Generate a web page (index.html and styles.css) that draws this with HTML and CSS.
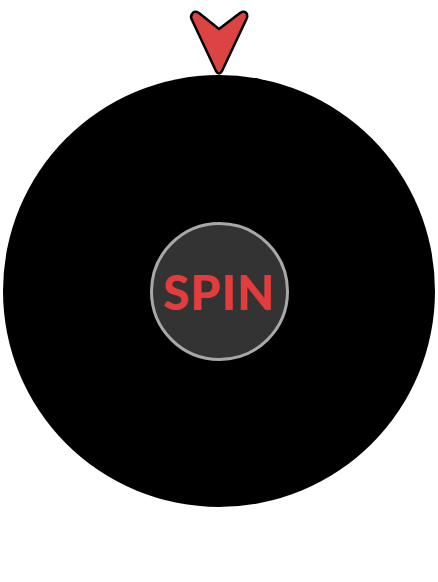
FILE: index.html
```html
<!DOCTYPE html>
<html>
<head>
<meta charset="utf-8">
<link rel="stylesheet" href="styles.css">
</head>
<body>
<div class="stage">
  <svg class="pointer" width="64" height="70" viewBox="0 0 64 70">
    <path d="M 11 5 L 31 21 L 52 5 Q 57 2 59 6 Q 60 9 58 12 L 34 63 Q 31 68 28 63 L 4 12 Q 2 9 4 6 Q 6 2 11 5 Z" fill="#dc4444" stroke="#000" stroke-width="2.5" stroke-linejoin="round"/>
  </svg>
  <div class="wheel">
    <button class="spin">SPIN</button>
  </div>
</div>
</body>
</html>
```
FILE: styles.css
```css
html, body {
  margin: 0;
  padding: 0;
  background: #fff;
}
.stage {
  position: relative;
  width: 438px;
  height: 582px;
  padding: 75px 0 0 3px;
  box-sizing: border-box;
}
.pointer {
  position: absolute;
  left: 188px;
  top: 8px;
  z-index: 2;
}
.wheel {
  width: 432px;
  height: 432px;
  border-radius: 50%;
  background: #000;
  display: flex;
  align-items: center;
  justify-content: center;
}
.spin {
  width: 139px;
  height: 139px;
  border-radius: 50%;
  background: #333;
  border: 3px solid #a8a8a8;
  color: #e23c3c;
  font-family: Lato, "Open Sans", sans-serif;
  font-weight: 900;
  font-size: 48px;
  letter-spacing: 1px;
  padding: 0;
  margin: 0;
  display: flex;
  align-items: center;
  justify-content: center;
  box-sizing: border-box;
}
```
